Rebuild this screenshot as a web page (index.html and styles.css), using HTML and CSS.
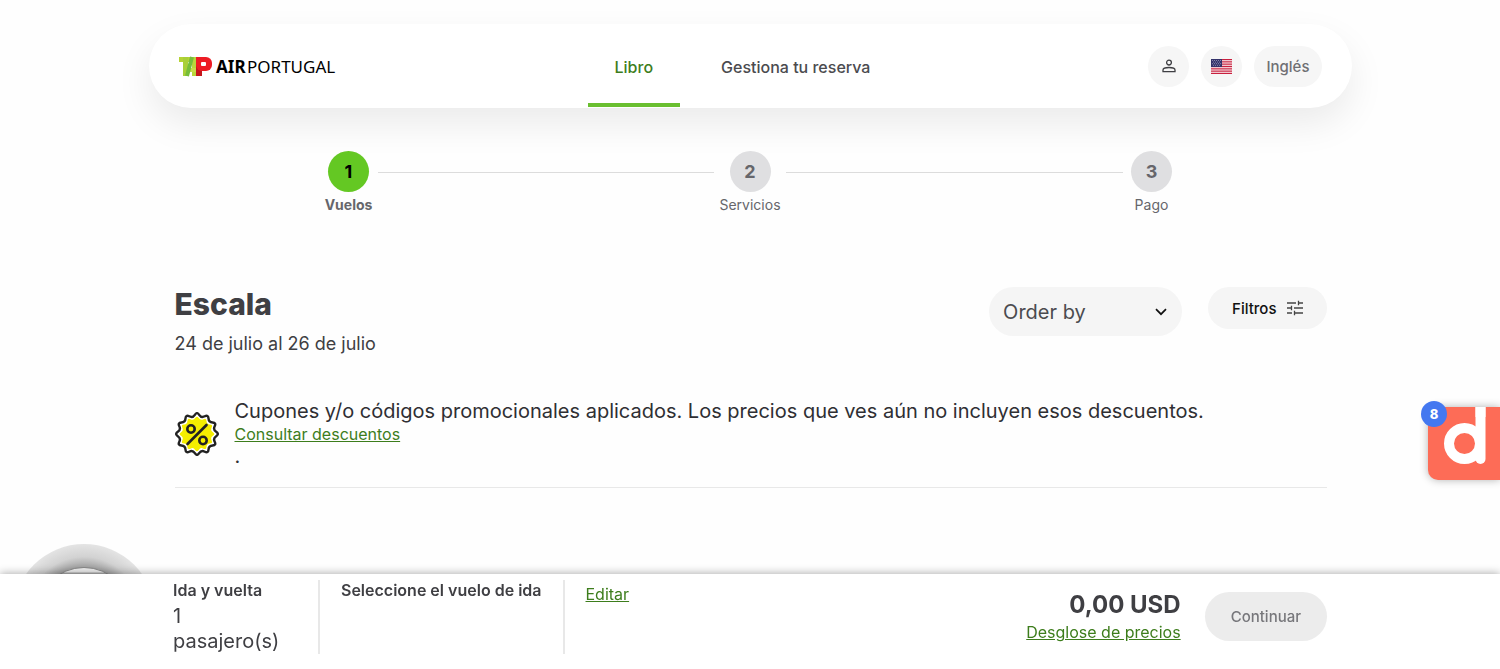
FILE: index.html
```
<!DOCTYPE html>
<html lang="es">
<head>
    <meta charset="UTF-8">
    <meta name="viewport" content="width=device-width, initial-scale=1.0">
    <link rel="stylesheet" href="styles.css">
    <title>TAP Air Portugal - Vuelos</title>
</head>
<body>
    <header class="header">
        <a href="#" class="logo" aria-label="TAP Air Portugal">
            <svg width="158" height="24" viewBox="0 0 158 24">
                <rect x="0" y="3" width="16" height="5" fill="#b5d334"/>
                <rect x="4" y="3" width="5" height="19" fill="#a9cf38"/>
                <rect x="13" y="3" width="4" height="19" fill="#b9d73c"/>
                <rect x="10" y="14" width="7" height="4" fill="#c7dc4a"/>
                <line x1="13" y1="3" x2="8" y2="22" stroke="#76bd3a" stroke-width="4"/>
                <rect x="17" y="3" width="6" height="19" fill="#c4161c"/>
                <rect x="17" y="3" width="16" height="14" rx="6" fill="#ed1c24"/>
                <rect x="17" y="3" width="6" height="6" fill="#ed1c24"/>
                <rect x="22" y="8" width="5" height="4" rx="1" fill="#fff"/>
                <text x="37" y="19" class="logo-air">AIR</text>
                <text x="68" y="19" class="logo-portugal">PORTUGAL</text>
            </svg>
        </a>
        <nav class="nav">
            <a href="#" class="nav-item active">Libro</a>
            <a href="#" class="nav-item">Gestiona tu reserva</a>
        </nav>
        <div class="header-actions">
            <button type="button" class="round-btn" aria-label="Mi cuenta">
                <svg width="14" height="14" viewBox="0 0 14 14" fill="none" stroke="#3f3f43" stroke-width="1.3">
                    <circle cx="7" cy="3.6" r="2.4"/>
                    <path d="M1 12.6v-1.500c0-1.700 3.400-2.600 6-2.600s6 .9 6 2.600v1.500z"/>
                </svg>
            </button>
            <button type="button" class="round-btn" aria-label="Estados Unidos">
                <svg width="21" height="15" viewBox="0 0 21 15">
                    <rect width="21" height="15" fill="#fff"/>
                    <path d="M0 .6h21M0 2.9h21M0 5.2h21M0 7.5h21M0 9.8h21M0 12.1h21M0 14.4h21" stroke="#c8203f" stroke-width="1.3"/>
                    <rect width="11" height="8" fill="#34336b"/>
                    <path d="M1 1.5h9M2 3.1h8M1 4.7h9M2 6.3h8" stroke="#c9c9dd" stroke-width=".7" stroke-dasharray=".8 1.2"/>
                </svg>
            </button>
            <button type="button" class="lang-btn">Inglés</button>
        </div>
    </header>

    <ol class="steps">
        <li class="step active">
            <span class="step-number">1</span>
            <span class="step-label">Vuelos</span>
        </li>
        <li class="step-line" aria-hidden="true"></li>
        <li class="step middle">
            <span class="step-number">2</span>
            <span class="step-label">Servicios</span>
        </li>
        <li class="step-line" aria-hidden="true"></li>
        <li class="step">
            <span class="step-number">3</span>
            <span class="step-label">Pago</span>
        </li>
    </ol>

    <main class="content">
        <div class="title-row">
            <div class="title">
                <h1>Escala</h1>
                <p>24 de julio al 26 de julio</p>
            </div>
            <div class="filters">
                <div class="select-box">
                    <select class="order-select" aria-label="Order by">
                        <option>Order by</option>
                        <option>Precio</option>
                        <option>Duración</option>
                    </select>
                    <svg class="select-arrow" width="12" height="8" viewBox="0 0 12 8" fill="none" stroke="#111" stroke-width="1.7">
                        <path d="M1 1.2l5 5 5-5"/>
                    </svg>
                </div>
                <button type="button" class="filter-btn">
                    Filtros
                    <svg width="16" height="16" viewBox="0 0 16 16" fill="none" stroke="#444" stroke-width="1.3">
                        <path d="M0 3h9M11 3h5M11.500 .8v4.400M0 8h4.500M7 8h9M4.500 5.800v4.400M0 13h5M7 13h9M7.500 10.800v4.400"/>
                    </svg>
                </button>
            </div>
        </div>

        <section class="promo">
            <svg class="promo-icon" width="44" height="44" viewBox="0 0 44 44">
                <defs>
                    <path id="seal" d="M41.2 19.85Q44.5 22 41.2 24.15Q37.9 26.3 39.7 29.8Q41.5 33.25 37.6 33.5Q33.7 33.7 33.5 37.6Q33.25 41.5 29.8 39.7Q26.3 37.9 24.15 41.2Q22 44.5 19.85 41.2Q17.7 37.9 14.2 39.7Q10.75 41.5 10.5 37.6Q10.3 33.7 6.4 33.5Q2.5 33.25 4.3 29.8Q6.1 26.3 2.8 24.15Q-.5 22 2.8 19.85Q6.1 17.7 4.3 14.2Q2.5 10.75 6.4 10.5Q10.3 10.3 10.5 6.4Q10.75 2.5 14.2 4.3Q17.7 6.1 19.85 2.8Q22 -.5 24.15 2.8Q26.3 6.1 29.8 4.3Q33.25 2.5 33.5 6.4Q33.7 10.3 37.6 10.5Q41.5 10.75 39.7 14.2Q37.9 17.7 41.2 19.85Z"/>
                </defs>
                <use href="#seal" fill="#fff" stroke="#222" stroke-width="2.400"/>
                <use href="#seal" fill="#f5ee00" transform="translate(3.700 3.700) scale(.83)"/>
                <g fill="none" stroke="#222" stroke-width="2.600" stroke-linecap="round">
                    <circle cx="16" cy="17" r="3.700"/>
                    <circle cx="28" cy="28.500" r="3.700"/>
                    <path d="M31.500 13L12.500 32"/>
                </g>
            </svg>
            <div class="promo-text">
                <p>Cupones y/o códigos promocionales aplicados. Los precios que ves aún no incluyen esos descuentos.</p>
                <a href="#">Consultar descuentos</a>
                <p>.</p>
            </div>
        </section>
    </main>

    <div class="chat-bubble"><div class="chat-inner"></div></div>

    <button type="button" class="widget" aria-label="Ofertas">
        <svg width="72" height="73" viewBox="0 0 72 73">
            <circle cx="36.500" cy="36.500" r="15.500" fill="none" stroke="#fff" stroke-width="10"/>
            <rect x="47.500" y="-5" width="10" height="62" rx="5" fill="#fff"/>
            <rect x="47.500" y="0" width="10" height="10" fill="#fff"/>
        </svg>
        <span class="widget-badge">8</span>
    </button>

    <footer class="bottom-bar">
        <div class="bottom-inner">
            <div class="trip">
                <strong>Ida y vuelta</strong>
                <span>1 pasajero(s)</span>
            </div>
            <div class="selection">
                <strong>Seleccione el vuelo de ida</strong>
            </div>
            <a href="#" class="edit-link">Editar</a>
            <div class="price">
                <strong>0,00 USD</strong>
                <a href="#">Desglose de precios</a>
            </div>
            <button type="button" class="continue-btn" disabled>Continuar</button>
        </div>
    </footer>
</body>
</html>
```
FILE: styles.css
```
* {
    box-sizing: border-box;
}

body {
    margin: 0;
    font-family: Inter, "Liberation Sans", sans-serif;
    font-size: 16px;
    color: #3f3f43;
    background-color: #fefefe;
}

h1,
p,
ol {
    margin: 0;
    padding: 0;
}

a {
    color: #3d7d1c;
}

button,
select {
    font-family: inherit;
    border: none;
    cursor: pointer;
}

.header {
    max-width: 1203px;
    height: 84px;
    margin: 24px auto 0;
    padding: 0 30px;
    display: flex;
    justify-content: space-between;
    align-items: center;
    background-color: #fff;
    border-radius: 42px;
    box-shadow: 0 16px 36px rgba(0, 0, 0, 0.08);
}

.logo {
    display: flex;
}

.logo-air,
.logo-portugal {
    font-family: "Noto Sans", sans-serif;
    font-size: 17px;
    fill: #000;
}

.logo-air {
    font-weight: 700;
}

.nav {
    display: flex;
    gap: 14px;
    height: 100%;
}

.nav-item {
    display: flex;
    align-items: center;
    padding: 6px 27px 0;
    border-bottom: 4px solid transparent;
    margin-bottom: 1px;
    color: #4b4b4f;
    font-weight: 500;
    text-decoration: none;
}

.nav-item.active {
    color: #3d7d1c;
    border-bottom-color: #6abf30;
}

.header-actions {
    display: flex;
    align-items: center;
    gap: 12px;
}

.round-btn,
.lang-btn {
    display: flex;
    align-items: center;
    justify-content: center;
    height: 41px;
    background-color: #f6f6f6;
    border-radius: 21px;
}

.round-btn {
    width: 41px;
    padding: 0;
}

.lang-btn {
    padding: 0 12px;
    color: #6f6f73;
    font-size: 15px;
    font-weight: 500;
}

.steps {
    max-width: 1203px;
    margin: 43px auto 0;
    padding: 0 171px;
    display: flex;
    list-style: none;
}

.step {
    width: 58px;
    display: flex;
    flex-direction: column;
    align-items: center;
    color: #66666b;
}

.step.middle {
    width: 72px;
}

.step-number {
    width: 41px;
    height: 41px;
    display: flex;
    align-items: center;
    justify-content: center;
    border-radius: 50%;
    background-color: #dfdfe1;
    font-size: 18px;
    font-weight: 700;
}

.step-label {
    margin-top: 4px;
    font-size: 14px;
    line-height: 18px;
}

.step.active .step-number {
    background-color: #64c823;
    color: #000;
}

.step.active .step-label {
    font-weight: 700;
}

.step-line {
    flex: 1;
    height: 1px;
    margin-top: 21px;
    background-color: #dcdcdc;
}

.content {
    max-width: 1203px;
    margin: 73px auto 0;
    padding: 0 25px 0 26px;
}

.title-row {
    display: flex;
    justify-content: space-between;
}

.title h1 {
    font-size: 30px;
    font-weight: 800;
    line-height: 34px;
}

.title p {
    margin-top: 11px;
    font-size: 18px;
    line-height: 24px;
}

.filters {
    display: flex;
    align-items: flex-start;
    gap: 26px;
}

.select-box {
    position: relative;
}

.order-select {
    appearance: none;
    width: 193px;
    height: 49px;
    padding: 0 14px;
    border-radius: 25px;
    background-color: #f5f5f5;
    color: #4b4b4f;
    font-size: 20px;
}

.select-arrow {
    position: absolute;
    right: 15px;
    top: 21px;
    pointer-events: none;
}

.filter-btn {
    display: flex;
    align-items: center;
    gap: 10px;
    height: 42px;
    padding: 0 24px;
    border-radius: 21px;
    background-color: #f5f5f5;
    color: #111;
    font-size: 15px;
    font-weight: 500;
}

.promo {
    display: flex;
    align-items: center;
    gap: 16px;
    margin-top: 43px;
    padding-bottom: 18px;
    border-bottom: 1px solid #e8e8e8;
    font-size: 20px;
    line-height: 25px;
    color: #2f2f33;
}

.promo-icon {
    flex: none;
}

.promo-text a {
    display: block;
    font-size: 16px;
    line-height: 20px;
}

.chat-bubble {
    position: fixed;
    left: 13px;
    bottom: -17px;
    width: 142px;
    height: 142px;
    padding-top: 23px;
    border-radius: 50%;
    background: radial-gradient(circle closest-side, #a0a0a0 67%, #d2d2d2 82%, #e4e4e4);
}

.chat-inner {
    width: 96px;
    height: 96px;
    margin: 0 auto;
    border-radius: 50%;
    border: 1px solid #888;
    background: linear-gradient(#eee 4px, #aaa 5px);
}

.widget {
    position: fixed;
    right: 0;
    top: 407px;
    width: 72px;
    height: 73px;
    padding: 0;
    border-radius: 10px 0 0 10px;
    background-color: #fd6c57;
    box-shadow: 0 0 8px rgba(0, 0, 0, 0.3);
}

.widget-badge {
    position: absolute;
    left: -7px;
    top: -6px;
    width: 26px;
    height: 26px;
    border-radius: 50%;
    background-color: #4478f0;
    color: #fff;
    font-size: 13px;
    font-weight: 800;
    line-height: 26px;
    text-align: center;
}

.bottom-bar {
    position: fixed;
    left: 0;
    right: 0;
    bottom: 0;
    padding: 6px 0 15px;
    background-color: #fff;
    box-shadow: 0 -1px 8px rgba(0, 0, 0, 0.3);
}

.bottom-inner {
    max-width: 1154px;
    margin: 0 auto;
    display: flex;
    align-items: flex-start;
}

.trip,
.selection {
    align-self: stretch;
    border-right: 2px solid #e8e8e8;
    line-height: 21px;
}

.trip strong,
.selection strong {
    font-weight: 600;
}

.trip {
    width: 147px;
    padding-right: 30px;
}

.trip span {
    display: block;
    margin-top: 3px;
    font-size: 20px;
    line-height: 25px;
}

.selection {
    padding: 0 21px;
}

.edit-link {
    margin-left: 21px;
    line-height: 28px;
}

.price {
    margin-left: auto;
    padding-top: 10px;
    display: flex;
    flex-direction: column;
    align-items: flex-end;
}

.price strong {
    font-size: 24px;
    line-height: 30px;
}

.price a {
    line-height: 24px;
}

.continue-btn {
    height: 49px;
    margin: 12px 0 0 24px;
    padding: 0 26px;
    border-radius: 25px;
    background-color: #ececec;
    color: #77777b;
    font-size: 15px;
    font-weight: 500;
    cursor: default;
}
```
